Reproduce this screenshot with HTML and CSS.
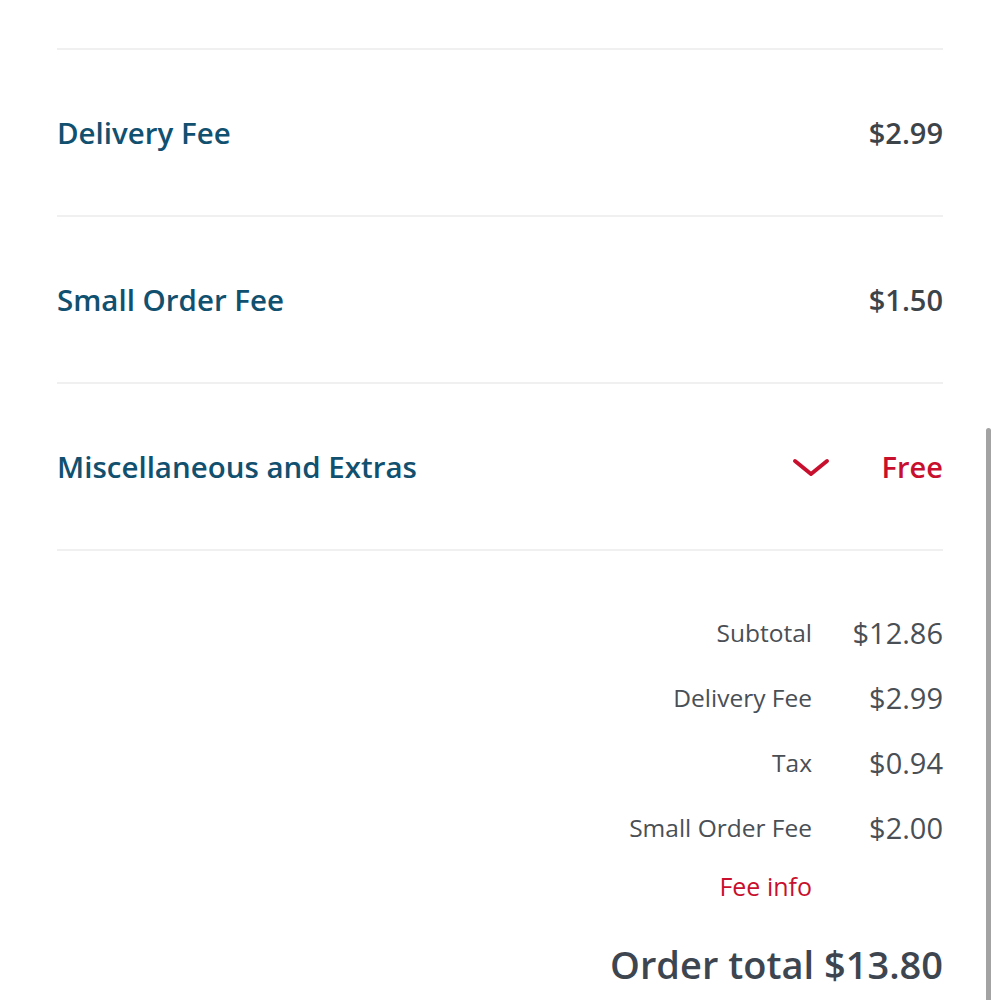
FILE: index.html
```html
<!DOCTYPE html>
<html lang="en">
<head>
    <meta charset="UTF-8">
    <meta name="viewport" content="width=device-width, initial-scale=1.0">
    <title>Order Summary</title>
    <link rel="stylesheet" href="styles.css">
</head>
<body>
    <div class="page">
        <div class="fees">
            <div class="fee-row">
                <span class="fee-name">Delivery Fee</span>
                <span class="fee-price">$2.99</span>
            </div>
            <div class="fee-row">
                <span class="fee-name">Small Order Fee</span>
                <span class="fee-price">$1.50</span>
            </div>
            <div class="fee-row">
                <span class="fee-name">Miscellaneous and Extras</span>
                <span class="fee-side">
                    <svg class="chevron" width="38" height="20" viewBox="0 0 38 20">
                        <path d="M3 3 L19 16 L35 3" fill="none" stroke="#c8102e" stroke-width="4" stroke-linecap="round" stroke-linejoin="round"/>
                    </svg>
                    <span class="fee-price free">Free</span>
                </span>
            </div>
        </div>

        <div class="summary">
            <span class="sum-label">Subtotal</span>
            <span class="sum-value">$12.86</span>
            <span class="sum-label">Delivery Fee</span>
            <span class="sum-value">$2.99</span>
            <span class="sum-label">Tax</span>
            <span class="sum-value">$0.94</span>
            <span class="sum-label">Small Order Fee</span>
            <span class="sum-value">$2.00</span>
            <a class="fee-info" href="#">Fee info</a>
            <span></span>
        </div>

        <div class="order-total">Order total $13.80</div>
    </div>
    <div class="scrollbar"></div>
</body>
</html>
```

FILE: styles.css
```css
body { margin: 0; background: #fff; font-family: "Open Sans", "Liberation Sans", sans-serif; overflow: hidden; height: 1000px; }
.page { padding: 48px 57px 0 57px; }
.fees { border-top: 2px solid #f0f0f0; }
.fee-row { height: 165px; border-bottom: 2px solid #f0f0f0; display: flex; align-items: center; justify-content: space-between; }
.fee-name { color: #11506f; font-size: 29.5px; font-weight: 600; }
.fee-price { color: #3d4449; font-size: 29px; font-weight: 600; }
.fee-side { display: flex; align-items: center; gap: 52px; }
.chevron { display: block; margin-top: 2px; }
.free { color: #c8102e; }
.summary { display: grid; grid-template-columns: auto 92px; justify-content: end; column-gap: 39px; padding-top: 49px; }
.sum-label { color: #4a4f55; font-size: 24.5px; text-align: right; height: 65px; line-height: 65px; }
.sum-value { color: #4a4f55; font-size: 29px; text-align: right; height: 65px; line-height: 65px; }
.fee-info { color: #c8102e; font-size: 25px; text-decoration: none; text-align: right; line-height: 52px; }
.order-total { text-align: right; color: #3d4650; font-size: 38px; font-weight: 600; margin-top: 26px; }
.scrollbar { position: absolute; left: 986px; top: 428px; width: 5px; height: 600px; background: #a3a3a3; border-radius: 3px; }
```
